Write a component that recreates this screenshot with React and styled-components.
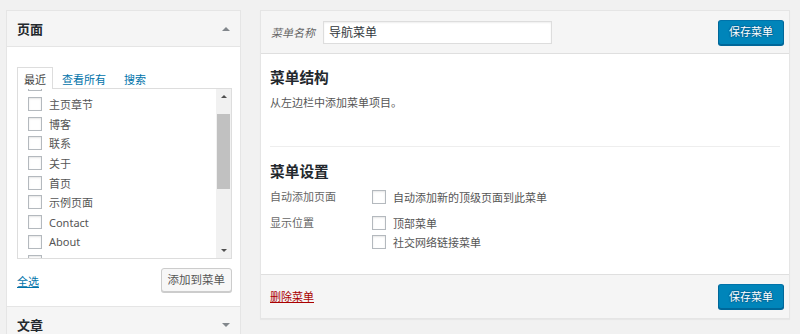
import React from "react";
import styled, { createGlobalStyle } from "styled-components";

const GlobalStyle = createGlobalStyle`
  html, body {
    margin: 0;
    padding: 0;
  }
  body {
    background: #f1f1f1;
    font-family: "Noto Sans", "Noto Sans CJK SC", sans-serif;
    font-size: 11px;
    color: #444;
    overflow: hidden;
  }
  * {
    box-sizing: border-box;
  }
`;

const Page = styled.div`
  display: flex;
  align-items: flex-start;
  gap: 19px;
  padding: 10px 10px 0 6px;
  height: 334px;
  overflow: hidden;
`;

/* ---------- left accordion ---------- */

const Sidebar = styled.div`
  width: 235px;
  flex-shrink: 0;
  border: 1px solid #e5e5e5;
  border-bottom: none;
  background: #fff;
`;

const Section = styled.div`
  border-bottom: 1px solid #e5e5e5;
`;

const SectionTitle = styled.div`
  height: ${(p) => (p.$open ? "36px" : "35px")};
  display: flex;
  align-items: center;
  justify-content: space-between;
  padding: 0 10px;
  background: #f5f5f5;
  border-bottom: ${(p) => (p.$open ? "1px solid #e5e5e5" : "none")};
  font-size: 13px;
  font-weight: bold;
  color: #23282d;
  line-height: 18px;
`;

const Triangle = styled.span`
  width: 0;
  height: 0;
  border-left: ${(p) => p.$size || 4}px solid transparent;
  border-right: ${(p) => p.$size || 4}px solid transparent;
  ${(p) =>
    p.$dir === "up"
      ? `border-bottom: ${p.$size || 4}px solid ${p.$color || "#82878c"};`
      : `border-top: ${p.$size || 4}px solid ${p.$color || "#82878c"};`}
`;

const SectionBody = styled.div`
  padding: 20px 8px 14px 10px;
`;

const Tabs = styled.div`
  display: flex;
  align-items: flex-end;
`;

const Tab = styled.div`
  position: relative;
  z-index: 1;
  height: 22px;
  margin-bottom: -1px;
  padding: 3px ${(p) => (p.$active ? "6px" : "8px")} 0;
  line-height: 18px;
  border: 1px solid ${(p) => (p.$active ? "#ddd" : "transparent")};
  border-bottom: none;
  background: ${(p) => (p.$active ? "#fff" : "transparent")};
  color: ${(p) => (p.$active ? "#444" : "#0073aa")};
`;

const ListBox = styled.div`
  display: flex;
  height: 171px;
  border: 1px solid #ddd;
  background: #fff;
`;

const ItemsViewport = styled.div`
  flex: 1;
  overflow: hidden;
`;

const ItemsList = styled.div`
  padding-left: 10px;
`;

const Item = styled.label`
  display: flex;
  align-items: center;
  gap: 7px;
  height: 19.7px;
  color: #555;
  white-space: nowrap;
`;

const Check = styled.input.attrs({ type: "checkbox" })`
  appearance: none;
  margin: 0;
  width: 14px;
  height: 14px;
  flex-shrink: 0;
  border: 1px solid #b4b9be;
  background: #fff;
  box-shadow: inset 0 1px 2px rgba(0, 0, 0, 0.1);
`;

const ScrollBar = styled.div`
  width: 15px;
  display: flex;
  flex-direction: column;
  background: #f1f1f1;
`;

const ScrollArrow = styled.div`
  height: 15px;
  display: flex;
  align-items: center;
  justify-content: center;
`;

const ScrollTrack = styled.div`
  flex: 1;
  padding-top: 10px;
`;

const Thumb = styled.div`
  height: 75px;
  margin: 0 1px;
  background: #c1c1c1;
`;

const BottomRow = styled.div`
  display: flex;
  align-items: center;
  justify-content: space-between;
  margin-top: 9px;
  height: 24px;
`;

const SelectAll = styled.a`
  color: #0073aa;
  text-decoration: underline;
  line-height: 18px;
  margin-top: 3px;
`;

const Button = styled.button`
  height: ${(p) => (p.$primary ? "25px" : "24px")};
  padding: 0 ${(p) => (p.$primary ? "10px" : "6px")};
  font-family: inherit;
  font-size: ${(p) => (p.$primary ? "11px" : "11.5px")};
  line-height: 18px;
  border-radius: 3px;
  border: 1px solid ${(p) => (p.$primary ? "#0073aa" : "#ccc")};
  ${(p) =>
    p.$primary
      ? `
    background: #0085ba;
    border-color: #0073aa #006799 #006799;
    box-shadow: 0 1px 0 #006799;
    color: #fff;
    text-shadow: 0 -1px 1px #006799, 1px 0 1px #006799, 0 1px 1px #006799, -1px 0 1px #006799;
  `
      : `
    background: #f7f7f7;
    box-shadow: 0 1px 0 #ccc;
    color: #555;
  `}
`;

/* ---------- right menu editor ---------- */

const Editor = styled.div`
  flex: 1;
  border: 1px solid #e5e5e5;
  box-shadow: 0 1px 1px rgba(0, 0, 0, 0.04);
  background: #fff;
`;

const EditorHeader = styled.div`
  height: 43px;
  display: flex;
  align-items: center;
  padding: 0 5px 0 10px;
  background: #f5f5f5;
  border-bottom: 1px solid #dfdfdf;
`;

const NameLabel = styled.span`
  font-style: italic;
  color: #666;
  margin-right: 8px;
`;

const NameInput = styled.input`
  width: 229px;
  height: 23px;
  padding: 0 5px;
  border: 1px solid #ddd;
  box-shadow: inset 0 1px 2px rgba(0, 0, 0, 0.07);
  background: #fff;
  font-family: inherit;
  font-size: 12px;
  color: #32373c;
  outline: none;
`;

const Spacer = styled.div`
  flex: 1;
`;

const EditorBody = styled.div`
  padding: 13px 9px 23px;
`;

const Heading = styled.h3`
  margin: ${(p) => p.$top || 0}px 0 0;
  font-size: 14.7px;
  line-height: 20px;
  font-weight: bold;
  color: #23282d;
`;

const Description = styled.p`
  margin: 7px 0 0;
  line-height: 18px;
  color: #555;
`;

const Divider = styled.div`
  margin-top: 34px;
  border-top: 1px solid #eee;
`;

const SettingRow = styled.div`
  display: flex;
  margin-top: ${(p) => p.$top}px;
`;

const SettingLabel = styled.div`
  width: 102px;
  flex-shrink: 0;
  line-height: 18px;
  color: #666;
`;

const Options = styled.div`
  display: flex;
  flex-direction: column;
`;

const Option = styled.label`
  display: flex;
  align-items: center;
  gap: 7px;
  height: ${(p) => (p.$tight ? "18.5px" : "18px")};
  color: #555;
`;

const EditorFooter = styled.div`
  height: 44px;
  display: flex;
  align-items: center;
  justify-content: space-between;
  padding: 0 5px 0 9px;
  background: #f5f5f5;
  border-top: 1px solid #dfdfdf;
`;

const DeleteLink = styled.a`
  color: #a00;
  text-decoration: underline;
  line-height: 18px;
`;

const pages = [
  "Cart",
  "主页章节",
  "博客",
  "联系",
  "关于",
  "首页",
  "示例页面",
  "Contact",
  "About",
  "Blog",
];

export default function App() {
  return (
    <>
      <GlobalStyle />
      <Page>
        <Sidebar>
          <Section>
            <SectionTitle $open>
              <span>页面</span>
              <Triangle $dir="up" />
            </SectionTitle>
            <SectionBody>
              <Tabs>
                <Tab $active>最近</Tab>
                <Tab>查看所有</Tab>
                <Tab>搜索</Tab>
              </Tabs>
              <ListBox>
                <ItemsViewport>
                  <ItemsList style={{ marginTop: -14.5 }}>
                    {pages.map((p) => (
                      <Item key={p}>
                        <Check />
                        <span>{p}</span>
                      </Item>
                    ))}
                  </ItemsList>
                </ItemsViewport>
                <ScrollBar>
                  <ScrollArrow>
                    <Triangle $dir="up" $size={3.5} $color="#505050" />
                  </ScrollArrow>
                  <ScrollTrack>
                    <Thumb />
                  </ScrollTrack>
                  <ScrollArrow>
                    <Triangle $dir="down" $size={3.5} $color="#505050" />
                  </ScrollArrow>
                </ScrollBar>
              </ListBox>
              <BottomRow>
                <SelectAll>全选</SelectAll>
                <Button>添加到菜单</Button>
              </BottomRow>
            </SectionBody>
          </Section>
          <Section>
            <SectionTitle>
              <span>文章</span>
              <Triangle $dir="down" />
            </SectionTitle>
          </Section>
        </Sidebar>

        <Editor>
          <EditorHeader>
            <NameLabel>菜单名称</NameLabel>
            <NameInput defaultValue="导航菜单" />
            <Spacer />
            <Button $primary>保存菜单</Button>
          </EditorHeader>
          <EditorBody>
            <Heading>菜单结构</Heading>
            <Description>从左边栏中添加菜单项目。</Description>
            <Divider />
            <Heading $top={14}>菜单设置</Heading>
            <SettingRow $top={7}>
              <SettingLabel>自动添加页面</SettingLabel>
              <Options>
                <Option>
                  <Check />
                  <span>自动添加新的顶级页面到此菜单</span>
                </Option>
              </Options>
            </SettingRow>
            <SettingRow $top={8}>
              <SettingLabel>显示位置</SettingLabel>
              <Options>
                <Option $tight>
                  <Check />
                  <span>顶部菜单</span>
                </Option>
                <Option $tight>
                  <Check />
                  <span>社交网络链接菜单</span>
                </Option>
              </Options>
            </SettingRow>
          </EditorBody>
          <EditorFooter>
            <DeleteLink>删除菜单</DeleteLink>
            <Button $primary>保存菜单</Button>
          </EditorFooter>
        </Editor>
      </Page>
    </>
  );
}
